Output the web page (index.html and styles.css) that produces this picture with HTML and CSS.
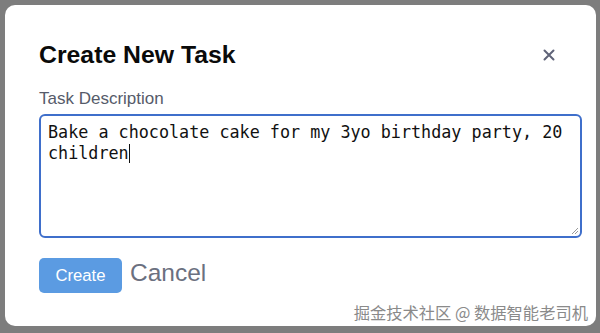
FILE: index.html
```html
<!DOCTYPE html>
<html>
<head>
<meta charset="utf-8">
<link rel="stylesheet" href="styles.css">
</head>
<body>
<div class="modal">
  <div class="header">
    <h1 class="title">Create New Task</h1>
    <span class="close">
      <svg width="12" height="12" viewBox="0 0 12 12"><path d="M1.5 1.5L10.5 10.5M10.5 1.5L1.5 10.5" stroke="#5f6378" stroke-width="2" stroke-linecap="round"/></svg>
    </span>
  </div>
  <label class="label">Task Description</label>
  <div class="textarea">Bake a chocolate cake for my 3yo birthday party, 20 children<span class="caret"></span></div>
  <div class="actions">
    <button class="btn-create">Create</button>
    <span class="btn-cancel">Cancel</span>
  </div>
  <div class="watermark">掘金技术社区 @ 数据智能老司机</div>
</div>
</body>
</html>
```
FILE: styles.css
```css
html, body {
  margin: 0;
  padding: 0;
}
body {
  width: 600px;
  height: 333px;
  background: #7d7d7d;
  padding: 5px 4px 7px 5px;
  box-sizing: border-box;
  font-family: "Liberation Sans", Arial, sans-serif;
}
.modal {
  position: relative;
  background: #fff;
  border-radius: 10px;
  height: 321px;
  box-sizing: border-box;
  padding: 35px 15px 0 34px;
}
.header {
  display: flex;
  justify-content: space-between;
  align-items: center;
  padding-right: 26px;
}
.title {
  margin: 0;
  font-size: 24.8px;
  line-height: 30px;
  font-weight: bold;
  color: #0a0a0a;
}
.close {
  display: flex;
}
.label {
  display: block;
  margin-top: 19px;
  font-size: 17px;
  line-height: 20px;
  color: #565b6a;
}
.textarea {
  margin-top: 5px;
  width: 543px;
  height: 124px;
  box-sizing: border-box;
  border: 2px solid #3f6fcb;
  border-radius: 6px;
  padding: 6px 7px;
  font-family: "DejaVu Sans Mono", monospace;
  font-size: 16.75px;
  line-height: 21px;
  color: #111;
  position: relative;
}
.textarea::after {
  content: "";
  position: absolute;
  right: 2px;
  bottom: 2px;
  width: 6px;
  height: 6px;
  background: linear-gradient(135deg, transparent 45%, #999 45%, #999 55%, transparent 55%, transparent 70%, #999 70%, #999 80%, transparent 80%);
}
.caret {
  display: inline-block;
  width: 1px;
  height: 19px;
  background: #111;
  vertical-align: -4px;
}
.actions {
  display: flex;
  align-items: center;
  gap: 8px;
  margin-top: 20px;
}
.btn-create {
  width: 83px;
  height: 35px;
  border: none;
  border-radius: 5px;
  background: #5b9be2;
  color: #fff;
  font-family: "Liberation Sans", Arial, sans-serif;
  font-size: 16.7px;
  padding: 0;
}
.btn-cancel {
  font-size: 24.5px;
  color: #6b7080;
  margin-top: -6px;
}
.watermark {
  position: absolute;
  right: 8px;
  bottom: 2px;
  font-family: "Noto Sans CJK SC", sans-serif;
  font-size: 16.3px;
  color: #8a8a8a;
  text-shadow: 1px 1px 0 #fff, -1px -1px 0 #fff, 1px -1px 0 #fff, -1px 1px 0 #fff;
}
```
